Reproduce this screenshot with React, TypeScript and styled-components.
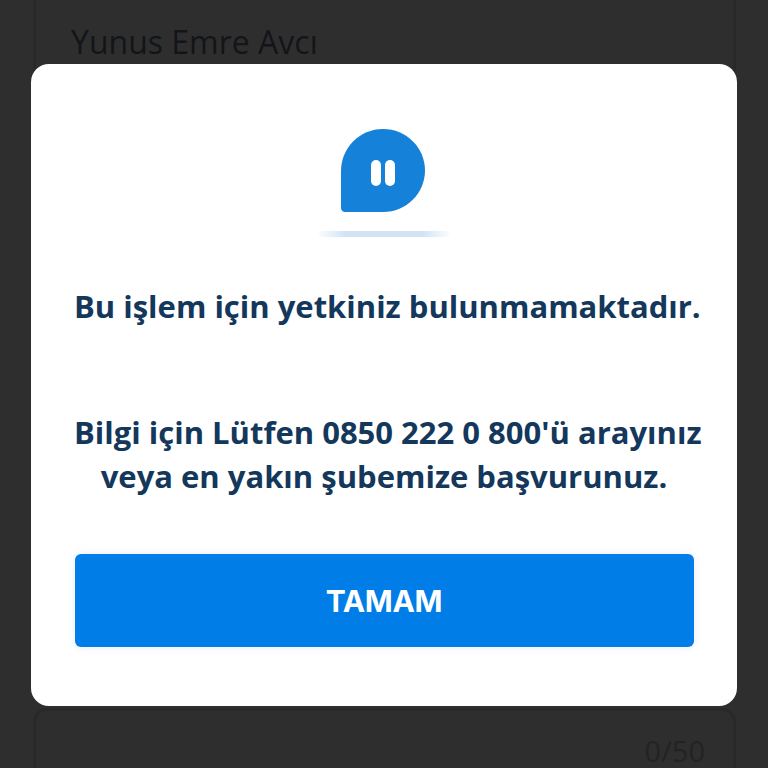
import styled, { createGlobalStyle } from 'styled-components';

const GlobalStyle = createGlobalStyle`
  html, body {
    margin: 0;
    padding: 0;
    background: #2e2e2e;
  }
`;

const Page = styled.div`
  display: flex;
  flex-direction: column;
  gap: 42px;
  height: 788px;
  margin-top: -20px;
  padding: 0 33px;
  overflow: hidden;
  box-sizing: border-box;
  font-family: 'Open Sans', sans-serif;
  background: #2e2e2e;
`;

const Field = styled.div<{ $height: number; $top: number; $align?: string }>`
  flex: none;
  display: flex;
  justify-content: ${(p) => p.$align || 'flex-start'};
  box-sizing: border-box;
  width: 703px;
  height: ${(p) => p.$height}px;
  padding: ${(p) => p.$top}px 28px 0 35px;
  border: 3px solid #292929;
  border-radius: 14px;
  font-size: 32px;
  line-height: 40px;
  color: #131518;
`;

const Counter = styled.span`
  font-size: 29px;
  line-height: 30px;
  color: #232323;
`;

const Overlay = styled.div`
  position: fixed;
  inset: 0;
  display: flex;
  align-items: flex-start;
  justify-content: center;
  padding-top: 64px;
`;

const Modal = styled.div`
  display: flex;
  flex-direction: column;
  align-items: center;
  box-sizing: border-box;
  width: 706px;
  height: 642px;
  padding: 64px 43px 0;
  background: #fff;
  border-radius: 18px;
  font-family: 'Open Sans', sans-serif;
`;

const IconBox = styled.div`
  width: 130px;
  height: 112px;
`;

const Message = styled.p<{ $gap: number }>`
  margin: ${(p) => p.$gap}px 0 0;
  width: 100%;
  font-size: 31px;
  line-height: 44px;
  font-weight: 700;
  text-align: center;
  white-space: nowrap;
  color: #14375c;
`;

const OkButton = styled.button`
  flex: none;
  width: 619px;
  height: 93px;
  margin-top: 56px;
  padding: 0;
  border: 0;
  border-radius: 6px;
  background: #007de6;
  box-shadow: 0 0 8px rgba(0, 125, 230, 0.12);
  font-family: Inter, 'Liberation Sans', sans-serif;
  font-size: 30px;
  font-weight: 700;
  letter-spacing: -0.3px;
  color: #fff;
`;

const PauseBubble = () => (
  <svg width="130" height="112" viewBox="0 0 130 112">
    <defs>
      <linearGradient id="shadow" x1="0" y1="0" x2="1" y2="0">
        <stop offset="0" stopColor="#dbe9f8" stopOpacity="0.2" />
        <stop offset="0.2" stopColor="#d3e3f6" />
        <stop offset="0.8" stopColor="#d3e3f6" />
        <stop offset="1" stopColor="#dbe9f8" stopOpacity="0.2" />
      </linearGradient>
    </defs>
    <path
      d="M64 1C40.800 1 22 19.800 22 43V80C22 82.200 23.800 84 26 84H64C87.200 84 106 65.400 106 42.500C106 19.600 87.200 1 64 1Z"
      fill="#1681d8"
    />
    <rect x="52" y="32" width="10" height="26" rx="5" fill="#fff" />
    <rect x="66" y="32" width="10" height="26" rx="5" fill="#fff" />
    <rect x="0" y="103" width="130" height="6" rx="3" fill="url(#shadow)" />
  </svg>
);

export default function App() {
  return (
    <>
      <GlobalStyle />
      <Page>
        <Field $height={686} $top={39}>
          Yunus Emre Avcı
        </Field>
        <Field $height={80} $top={25} $align="flex-end">
          <Counter>0/50</Counter>
        </Field>
      </Page>
      <Overlay>
        <Modal>
          <IconBox>
            <PauseBubble />
          </IconBox>
          <Message $gap={44}>Bu işlem için yetkiniz bulunmamaktadır.</Message>
          <Message $gap={82}>
            Bilgi için Lütfen 0850 222 0 800'ü arayınız
            <br />
            veya en yakın şubemize başvurunuz.
          </Message>
          <OkButton>TAMAM</OkButton>
        </Modal>
      </Overlay>
    </>
  );
}
